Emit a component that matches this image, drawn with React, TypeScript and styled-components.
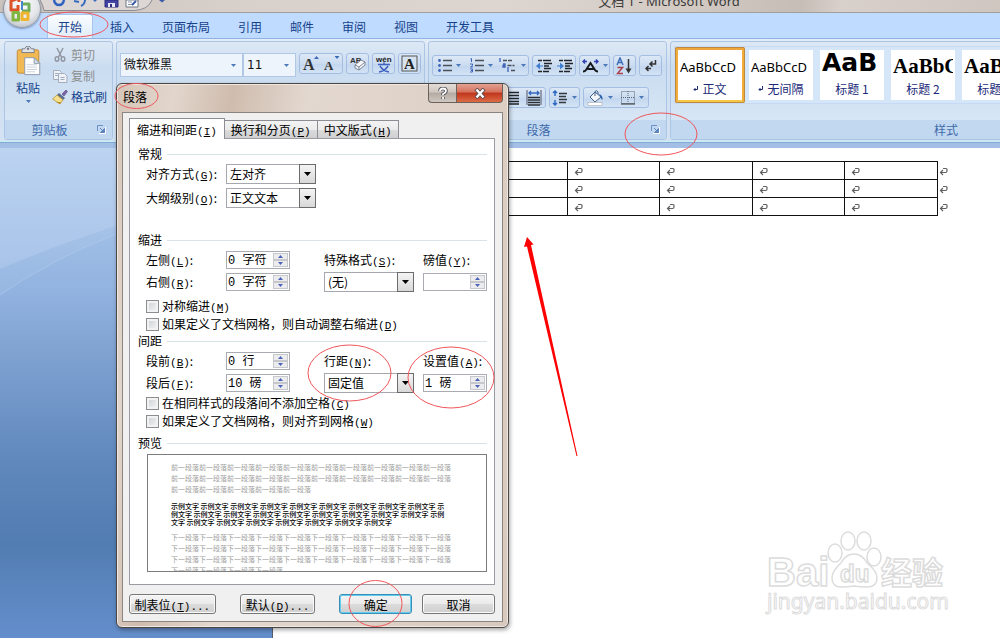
import React from "react";
import styled, { createGlobalStyle } from "styled-components";

const ui = `"Noto Sans", "Noto Sans CJK SC", sans-serif`;
const cjk = `"Noto Sans CJK SC", sans-serif`;
const mono = `"Liberation Mono", "Noto Sans CJK SC", monospace`;

const GlobalStyle = createGlobalStyle`
  *, *::before, *::after { box-sizing: border-box; }
  body { margin: 0; font: 12px/16px ${cjk}; color: #000; }
  button, input, select { font: inherit; color: inherit; margin: 0; padding: 0; }
  svg { display: block; flex: none; }
`;

const AppWindow = styled.div`
  position: relative;
  display: flex;
  flex-direction: column;
  min-height: 100vh;
  overflow: hidden;
  background: #fff;
`;

/* ---------- title bar and tabs ---------- */

const TitleBar = styled.header`
  position: relative;
  display: flex;
  justify-content: center;
  align-items: flex-end;
  height: 13px;
  padding-left: 338px;
  overflow: hidden;
  border-bottom: 1px solid #a39e9b;
  background: linear-gradient(100deg, #cbc3bd 0%, #d8d0ca 25%, #ddd6d0 50%, #d3cac4 68%, #c6bdb6 80%, #d8d0cb 84%, #cfc6c0 100%);
`;

const WindowTitle = styled.h1`
  margin: 0;
  font: 13px/22px ${ui};
  color: #3a3a3a;
  white-space: nowrap;
`;

const QuickAccess = styled.div`
  position: absolute;
  left: 40px;
  top: 0;
`;

const OfficeButton = styled.button`
  position: absolute;
  z-index: 2;
  left: 3px;
  top: -10px;
  width: 38px;
  height: 38px;
  border: 1px solid #8f9aa8;
  border-radius: 50%;
  background: radial-gradient(circle at 50% 35%, #fdfdfe 0%, #e4e6ea 55%, #b4b9c2 90%);
  box-shadow: 0 1px 2px rgba(60, 80, 120, 0.5);
`;

const TabBar = styled.nav`
  display: flex;
  align-items: flex-end;
  gap: 6px;
  height: 25px;
  padding-left: 47px;
  background: #bfdbff;
`;

const RibbonTab = styled.button<{ $active?: boolean }>`
  height: 24px;
  padding: 0 10px;
  border: 1px solid ${p => (p.$active ? "#a6c6ee" : "transparent")};
  border-bottom: 0;
  border-radius: 3px 3px 0 0;
  background: ${p => (p.$active ? "linear-gradient(#fafdff, #e1ecf9)" : "none")};
  font: 12px/22px ${cjk};
  color: #15428b;
`;

/* ---------- ribbon ---------- */

const Ribbon = styled.section`
  display: flex;
  gap: 3px;
  height: 104px;
  padding: 2px 0 1px 4px;
  overflow: hidden;
  border-top: 1px solid #8db2e3;
  border-bottom: 1px solid #c4f1f3;
  background: linear-gradient(#e3ecf7 0%, #cfdff1 25%, #d3e3f4 100%);
`;

const RibbonEdge = styled.div`
  height: 6px;
  background: #a3bfe6;
  border-top: 1px solid #86a8d4;
`;

const Group = styled.section<{ $width?: number }>`
  display: flex;
  flex-direction: column;
  flex: ${p => (p.$width ? `0 0 ${p.$width}px` : "1 0 560px")};
  overflow: hidden;
  border: 1px solid #abc6e5;
  border-radius: 3px;
  background: linear-gradient(#dde8f5 0%, #d0e0f2 20%, #c9dcf0 25%, #dbe9f6 100%);
`;

const GroupBody = styled.div<{ $inset: string }>`
  flex: 1;
  padding: ${p => p.$inset};
`;

const GroupLabel = styled.div`
  display: flex;
  align-items: center;
  justify-content: center;
  height: 19px;
  padding: 0 5px;
  background: #c1d8f0;
  color: #3e6aaa;
`;

const LabelText = styled.span`
  flex: 1;
  padding-right: 8px;
  text-align: center;
`;

const Launcher = styled.button`
  width: 10px;
  height: 14px;
  border: 0;
  background: none;
`;

const ClipboardBody = styled.div`
  display: flex;
  gap: 7px;
  padding: 2px 0 0 6px;
`;

const PasteButton = styled.button`
  display: flex;
  flex-direction: column;
  align-items: center;
  gap: 4px;
  width: 34px;
  padding-top: 2px;
  border: 0;
  background: none;
  color: #15428b;
`;

const ClipboardList = styled.div`
  display: flex;
  flex-direction: column;
`;

const ClipboardCommand = styled.button`
  display: flex;
  align-items: center;
  gap: 3px;
  height: 21px;
  border: 0;
  background: none;
  color: #15428b;
  &:disabled { color: #8d8d8d; }
`;

const ToolRow = styled.div<{ $gap?: number }>`
  display: flex;
  gap: ${p => p.$gap ?? 3}px;
  & + & { margin-top: 11px; }
`;

const FontCombo = styled.div<{ $width: number }>`
  display: flex;
  align-items: center;
  width: ${p => p.$width}px;
  height: 24px;
  padding: 0 5px 0 3px;
  border: 1px solid #b0c8e6;
  background: #edf4fc;
`;

const ComboInput = styled.input`
  flex: 1;
  min-width: 0;
  border: 0;
  outline: 0;
  background: none;
  font: 12px/20px ${ui};
  color: #111;
`;

const SizeInput = styled(ComboInput)`
  font: 12px/20px "DejaVu Sans", sans-serif;
`;

const DropButton = styled.button`
  display: flex;
  align-items: center;
  justify-content: center;
  width: 7px;
  height: 16px;
  border: 0;
  background: none;
`;

const ToolCluster = styled.div`
  display: flex;
  align-items: center;
  justify-content: space-around;
  height: 21px;
  border: 1px solid #a3bee2;
  border-radius: 3px;
  background: linear-gradient(#dce8f6, #cbdcf1 50%, #c2d6ee 52%, #d3e3f5);
`;

const ToolButton = styled.button<{ $width: number }>`
  display: flex;
  align-items: center;
  justify-content: center;
  gap: 4px;
  width: ${p => p.$width}px;
  height: 19px;
  border: 0;
  background: none;
`;

const Gallery = styled.div`
  display: flex;
  gap: 1px;
  height: 58px;
  border: 1px solid #c6dbf3;
  background: #d5e6f8;
`;

const StyleCard = styled.button<{ $active?: boolean }>`
  flex: 0 0 70px;
  height: 56px;
  padding: 0;
  border: 3px solid transparent;
  ${p => p.$active && `
    border-color: #eda63b #f2ac3c #f6c84a;
    border-radius: 2px;
    outline: 1px solid #c08a3e;
    outline-offset: -1px;
  `}
  background: #fff;
  background-clip: padding-box;
  overflow: hidden;
`;

const Sample = styled.span<{ $kind: "body" | "title" | "serif" }>`
  display: block;
  height: 30px;
  margin: 0 2px;
  overflow: hidden;
  white-space: nowrap;
  text-align: left;
  color: #000;
  font: ${p => ({
    body: `13px/34px ${ui}`,
    title: `bold 25px/26px "DejaVu Sans", sans-serif`,
    serif: `bold 21px/32px "Liberation Serif", serif`,
  })[p.$kind]};
`;

const StyleName = styled.span`
  display: flex;
  align-items: center;
  justify-content: center;
  gap: 4px;
  height: 20px;
  padding-bottom: 2px;
  color: #1c2a78;
  white-space: pre;
`;

/* ---------- document ---------- */

const Workspace = styled.main`
  flex: 1;
  display: flex;
`;

const Gutter = styled.div`
  flex: 0 0 272px;
  background: linear-gradient(#b3ceed 0%, #a6c3e9 12%, #91b2df 30%, #7fa2d1 42%, #6088bd 64%, #527db2 81%, #648ecb 100%);
`;

const Page = styled.article`
  flex: 1;
  padding: 13px 49px 0 16px;
  border-left: 1px solid #56606e;
  background: #fff;
`;

const DocTable = styled.table`
  width: 100%;
  border-collapse: collapse;
  table-layout: fixed;
`;

const DocCell = styled.td`
  height: 18px;
  padding: 2px 0 0 6px;
  border: 1px solid #111;
`;

const RowEnd = styled.td`
  width: 13px;
  padding: 2px 0 0 1px;
`;

/* ---------- dialog ---------- */

const Dialog = styled.section`
  position: absolute;
  z-index: 3;
  left: 116px;
  top: 83px;
  width: 393px;
  padding: 0 5px 5px;
  border: 1px solid #4b4744;
  border-radius: 6px;
  background: linear-gradient(100deg, #d6c5b8 0%, #e2d6cc 12%, #cfbcae 24%, #e3d8d0 40%, #d9c9bd 100%);
  box-shadow: inset 0 0 0 1px #f0e8e2, 1px 2px 4px rgba(0, 0, 0, 0.35);
`;

const DialogHeader = styled.header`
  display: flex;
  align-items: flex-start;
  height: 28px;
`;

const DialogTitle = styled.h2`
  flex: 1;
  margin: 0;
  padding: 5px 0 0 1px;
  font: 12px/16px ${cjk};
`;

const CaptionButton = styled.button<{ $close?: boolean }>`
  display: flex;
  align-items: center;
  justify-content: center;
  width: ${p => (p.$close ? 47 : 28)}px;
  height: 19px;
  border: 1px solid #6b625c;
  border-top: 0;
  border-radius: ${p => (p.$close ? "0 0 4px 0" : "0 0 0 4px")};
  border-right-width: ${p => (p.$close ? 1 : 0)}px;
  background: ${p => p.$close
    ? "linear-gradient(#e3a293 0%, #d5715c 45%, #c0351b 50%, #dd6a45 100%)"
    : "linear-gradient(#e3dbd5 0%, #cfc6bf 45%, #b3aaa3 50%, #cfc7c1 100%)"};
`;

const DialogBody = styled.form`
  padding: 5px 7px 7px 6px;
  border: 1px solid #8b8581;
  background: #f0f0f0;
`;

const DialogTabs = styled.div`
  display: flex;
  align-items: flex-end;
  height: 20px;
`;

const DialogTab = styled.button<{ $active?: boolean }>`
  position: relative;
  height: ${p => (p.$active ? 21 : 18)}px;
  margin-bottom: ${p => (p.$active ? -1 : 0)}px;
  padding: 0 ${p => (p.$active ? 7 : 6)}px;
  border: 1px solid #8c8e94;
  border-bottom: 0;
  border-left-width: ${p => (p.$active ? 1 : 0)}px;
  background: ${p => (p.$active ? "#fff" : "linear-gradient(#f3f3f3, #ebebeb 50%, #dcdcdc 52%, #d0d0d0)")};
  line-height: 17px;
  white-space: nowrap;
`;

const Panel = styled.div`
  padding: 7px 7px 12px 8px;
  border: 1px solid #9a9ca2;
  background: #fff;
`;

const SectionTitle = styled.h3<{ $top?: number }>`
  display: flex;
  align-items: center;
  gap: 5px;
  margin: ${p => p.$top ?? 0}px 0 2px;
  font: 12px/16px ${cjk};
  &::after {
    content: "";
    flex: 1;
    height: 1px;
    background: #d8e2e9;
  }
`;

const FieldGrid = styled.div<{ $gap: number }>`
  display: grid;
  grid-template-columns: 80px 98px 99px 64px;
  grid-auto-rows: 20px;
  row-gap: ${p => p.$gap}px;
  align-items: center;
  padding-left: 8px;
`;

const FieldLabel = styled.label<{ $column?: number }>`
  white-space: nowrap;
  ${p => p.$column && `grid-column: ${p.$column};`}
`;

const KeyHint = styled.span`
  font: 11px/12px ${mono};
`;

const SelectBox = styled.span`
  display: grid;
  grid-template-columns: 1fr 17px;
  width: 90px;
  height: 20px;
`;

const NativeSelect = styled.select`
  grid-area: 1 / 1 / 2 / 3;
  appearance: none;
  padding: 0 17px 0 3px;
  border: 1px solid #a5a8ae;
  border-radius: 0;
  background: #fff;
`;

const SelectArrow = styled.span`
  grid-area: 1 / 2 / 2 / 3;
  display: flex;
  align-items: center;
  justify-content: center;
  border: 1px solid #6c6c6c;
  background: linear-gradient(#f4f4f4, #d8d8d8);
  pointer-events: none;
`;

const SpinBox = styled.span`
  display: flex;
  width: 64px;
  height: 18px;
  border: 1px solid #a9acb3;
  background: #fff;
`;

const SpinInput = styled.input`
  flex: 1;
  min-width: 0;
  padding: 2px 0 0 1px;
  border: 0;
  outline: 0;
  background: none;
  font: 12px/14px ${mono};
`;

const SpinButtons = styled.span`
  display: flex;
  flex-direction: column;
  padding: 1px;
`;

const SpinButton = styled.button`
  display: flex;
  align-items: center;
  justify-content: center;
  width: 15px;
  height: 7px;
  border: 1px solid #c6c8cc;
  background: #ececee;
`;

const CheckList = styled.div<{ $top: number }>`
  margin-top: ${p => p.$top}px;
  padding-left: 8px;
`;

const CheckLabel = styled.label`
  display: flex;
  align-items: center;
  height: 18px;
  white-space: nowrap;
`;

const CheckInput = styled.input`
  appearance: none;
  flex: none;
  width: 13px;
  height: 13px;
  margin-right: 3px;
  border: 1px solid #8b8d90;
  background: linear-gradient(135deg, #cbcfd5, #f6f6f6);
  box-shadow: inset 0 0 0 2px #f2f2f2;
`;

const Preview = styled.div`
  height: 118px;
  margin: 3px 0 0 9px;
  padding: 7px 0 0 23px;
  overflow: hidden;
  border: 1px solid #7c7c7c;
`;

const PreviewText = styled.p<{ $sample?: boolean }>`
  width: ${p => (p.$sample ? 276 : 280)}px;
  margin: ${p => (p.$sample ? "7px 0 6px" : "0")};
  font-size: 7px;
  line-height: ${p => (p.$sample ? 8 : 11)}px;
  font-weight: ${p => (p.$sample ? 500 : 400)};
  color: ${p => (p.$sample ? "#000" : "#a0a0a0")};
  word-break: break-all;
`;

const ButtonBar = styled.div`
  display: flex;
  gap: 10px;
  margin-top: 9px;
`;

const PushButton = styled.button<{ $width: number; $primary?: boolean; $spaced?: boolean }>`
  width: ${p => p.$width}px;
  height: 20px;
  margin-right: ${p => (p.$spaced ? 14 : 0)}px;
  border: 1px solid ${p => (p.$primary ? "#3c8fb4" : "#777")};
  border-radius: 3px;
  background: linear-gradient(#f4f4f4, #ebebeb 48%, #dcdcdc 50%, #cfcfcf);
  box-shadow: inset 0 0 0 1px ${p => (p.$primary ? "#5fcdf2" : "#fafafa")};
  line-height: 17px;
  white-space: nowrap;
`;

/* ---------- drawings over the window ---------- */

const Watermark = styled.svg`
  position: absolute;
  left: 760px;
  top: 525px;
`;

const Markup = styled.svg`
  position: absolute;
  z-index: 4;
  left: 0;
  top: 0;
  pointer-events: none;
`;

const Caret = ({ color = "#4a78b8" }: { color?: string }) => (
  <svg width="5" height="3" viewBox="0 0 5 3"><path d="M0 0h5L2.500 3z" fill={color} /></svg>
);

const Key = ({ k }: { k: string }) => <KeyHint>(<u>{k}</u>)</KeyHint>;

const ParagraphMark = () => (
  <svg width="9" height="9" viewBox="0 0 9 9" fill="none" stroke="#606060" strokeWidth="1.200">
    <path d="M4 1.500h3q1 0 1 1v1.500q0 1.500-1.500 1.500H1.500M4 3L1.500 5.500 4 8" />
  </svg>
);

const LauncherIcon = () => (
  <svg width="9" height="9" viewBox="0 0 9 9" fill="none">
    <path d="M.5 6V.5H6" stroke="#6a90c4" />
    <path d="M3 3l3 3M7.500 3.500v4h-4z" stroke="#5d84bb" fill="#5d84bb" />
    <path d="M2 8.500h6.500V2" stroke="#fff" />
  </svg>
);

const PasteIcon = () => (
  <svg width="27" height="30" viewBox="0 0 28 32">
    <rect x="2" y="4" width="23" height="25" rx="2" fill="#f0b954" stroke="#c48a35" />
    <path d="M7 3h3q1-3 3.500-3T17 3h3v4H7z" fill="#dfe3e8" stroke="#747c88" />
    <circle cx="13.500" cy="3" r="1.300" fill="#747c88" />
    <path d="M10 12.500h10l6 6V30.500H10z" fill="#fff" stroke="#8a98ad" />
    <path d="M20 12.500v6h6z" fill="#d7e0ec" stroke="#8a98ad" />
    <path d="M12 20h11M12 22.500h11M12 25h11M12 27.500h9" stroke="#c6cedb" />
  </svg>
);

const CutIcon = () => (
  <svg width="16" height="16" viewBox="0 0 16 16" fill="none" stroke="#9298a3" strokeWidth="1.500">
    <path d="M5 1l4.500 9M11 1L6.500 10" />
    <ellipse cx="5" cy="12" rx="1.800" ry="2.200" /><ellipse cx="11" cy="12" rx="1.800" ry="2.200" />
  </svg>
);

const CopyIcon = () => (
  <svg width="16" height="16" viewBox="0 0 16 16" fill="#eef1f6" stroke="#a2adbf">
    <path d="M1.500 2.500h6l2 2v7h-8z" /><path d="M6.500 5.500h6l2.500 2.500v6.500H6.500z" />
    <path d="M3 5.500h3M3 7.500h3M8.500 9.500h4M8.500 11.500h4" />
  </svg>
);

const BrushIcon = () => (
  <svg width="16" height="16" viewBox="0 0 16 16">
    <path d="M10 5l4-4 1.500 1.500L12 7z" fill="#7c66a8" stroke="#54437e" strokeWidth=".6" />
    <path d="M7 4l6 5-2 2-6-5z" fill="#5a6b8c" />
    <path d="M5 6l6 5-3 4-7.500-5z" fill="#f5de8c" stroke="#b99636" strokeWidth=".8" />
    <path d="M4 13l4 2 1-2z" fill="#b98c2e" />
  </svg>
);

const ListLines = ({ left }: { left: React.ReactNode }) => (
  <svg width="14" height="15" viewBox="0 0 14 15">
    {left}
    <path d="M5 2.500h9M5 7.500h9M5 12.500h9" stroke="#4a4f58" strokeWidth="1.300" />
  </svg>
);

const BulletIcon = () => (
  <ListLines left={<g fill="#3d64b8"><circle cx="1.500" cy="2.500" r="1.400" /><circle cx="1.500" cy="7.500" r="1.400" /><circle cx="1.500" cy="12.500" r="1.400" /></g>} />
);

const NumberIcon = () => (
  <ListLines left={<path d="M.5 1l1-.5V4M0 6h2.500v1.500L.5 9h2.500M0 11h2.500v3H0M1 12.500h1.500" stroke="#3d64b8" fill="none" />} />
);

const MultiIcon = () => (
  <svg width="18" height="15" viewBox="0 0 18 15" fill="none">
    <path d="M1 0v4M4 6h2v3H4V7.500h2M9 9v5" stroke="#3d64b8" strokeWidth="1.300" />
    <path d="M4 2.500h10M8.500 7.500h7M12 12.500h5" stroke="#4a4f58" strokeWidth="1.300" strokeDasharray="4 1" />
  </svg>
);

const IndentIcon = ({ inward }: { inward?: boolean }) => (
  <svg width="16" height="14" viewBox="0 0 16 14" fill="none">
    <path d="M2 1.500h4M7 1.500h8M8 4.500h8M8 7h5M8 9.500h7M2 12.500h4M7 12.500h6" stroke="#20242a" strokeWidth="1.600" />
    <path d={inward ? "M0 6.500h3v-3l4 3.500-4 3.500v-3H0z" : "M7 6.500H4v-3L0 7l4 3.500v-3h3z"} fill="#3f7fd0" />
  </svg>
);

const ScaleIcon = () => (
  <svg width="17" height="14" viewBox="0 0 17 14" fill="none">
    <path d="M1 12.500q2 0 3-1.500l4.500-7L13 11q1 1.500 3 1.500M5.500 10h6" stroke="#15181d" strokeWidth="2" />
    <path d="M1 2.500h4M3 .5L1 2.500l2 2M12 2.500h4M14 .5l2 2-2 2" stroke="#2f3fb0" strokeWidth="1.400" />
  </svg>
);

const SortIcon = () => (
  <svg width="17" height="18" viewBox="0 0 17 18" fill="none" strokeWidth="1.500">
    <path d="M1 8l3-7 3 7M2 5.500h4" stroke="#3e6fb6" />
    <path d="M1.500 10.500h5L1.500 16.500h5.500" stroke="#a9414b" />
    <path d="M12.500 2v12" stroke="#333" /><path d="M9.500 11.500h6l-3 5z" fill="#333" />
  </svg>
);

const MarksIcon = () => (
  <svg width="14" height="14" viewBox="0 0 14 14" fill="none" stroke="#333" strokeWidth="1.500">
    <path d="M11.500 1v4H6M8.500 2.500L6 5l2.500 2.500M7 9.500H2M4.500 7L2 9.500 4.500 12" />
  </svg>
);

const JustifyIcon = () => (
  <svg width="15" height="14" viewBox="0 0 15 14"><path d="M0 1.500h15M0 4.500h15M0 7.500h15M0 10.500h15M0 13h15" stroke="#20242a" strokeWidth="1.500" /></svg>
);

const DistributeIcon = () => (
  <svg width="16" height="16" viewBox="0 0 16 16" fill="none">
    <path d="M1 0v15M15 0v15" stroke="#556" />
    <path d="M3 3h10M5 1L3 3l2 2M11 1l2 2-2 2" stroke="#3667c0" strokeWidth="1.300" />
    <path d="M2 7.500h12M2 10h12M2 12.500h12M2 15h12" stroke="#2a2e35" strokeWidth="1.400" />
  </svg>
);

const SpacingIcon = () => (
  <svg width="16" height="16" viewBox="0 0 16 16" fill="none">
    <path d="M3 1v5M1 3l2-2 2 2M3 10v5M1 13l2 2 2-2" stroke="#2f6bc4" strokeWidth="1.500" />
    <path d="M7 3.500h8M7 6.500h7M7 9.500h8M7 12.500h7" stroke="#33373e" strokeWidth="1.300" />
  </svg>
);

const BucketIcon = () => (
  <svg width="17" height="16" viewBox="0 0 17 16">
    <path d="M3 7l5-5 6 5-6 5z" fill="#f2f6fb" stroke="#44608c" />
    <path d="M8 6V1.500Q9.500-.5 11 2v2" fill="none" stroke="#44608c" />
    <path d="M12 4q4 1 3.500 6-2-1-2-3z" fill="#2e68b8" />
    <rect x="1" y="12.500" width="14" height="3" fill="#fff" stroke="#a8a8a8" strokeWidth=".6" />
  </svg>
);

const BorderIcon = () => (
  <svg width="14" height="14" viewBox="0 0 14 14" fill="none" stroke="#5a6575">
    <path d="M.5 .5h13v12H.5zM7 0v12M0 6.500h13" strokeDasharray="1 1" /><path d="M0 13h14" stroke="#333" />
  </svg>
);

const LetterIcon = ({ size, up }: { size: number; up: boolean }) => (
  <svg width="18" height="17" viewBox="0 0 18 17">
    <text x="1" y="15" fontFamily="Liberation Serif" fontWeight="bold" fontSize={size} fill="#333">A</text>
    <path d={up ? "M12 4h5L14.500 1z" : "M11.500 1h5L14 4z"} fill="#3d6cb4" />
  </svg>
);

const ClearIcon = () => (
  <svg width="18" height="17" viewBox="0 0 18 17">
    <text x="1" y="8" fontFamily="Liberation Sans" fontWeight="bold" fontSize="8" fill="#333">AB</text>
    <path d="M6 10l6-5 4 2v3l-6 5-4-2z" fill="#f6f8fb" stroke="#7d8796" /><path d="M6 10l4 2 6-5M10 12v3" fill="none" stroke="#7d8796" />
  </svg>
);

const PhoneticIcon = () => (
  <svg width="18" height="18" viewBox="0 0 18 18">
    <text x="1" y="7" fontFamily="Liberation Sans" fontWeight="bold" fontSize="8" fill="#222">wén</text>
    <path d="M3 9.500h12M9 7.500v2M5 11q3 5 9 6M13 11q-3 5-9 6" fill="none" stroke="#3e62c0" strokeWidth="1.500" />
  </svg>
);

const CharBorderIcon = () => (
  <svg width="17" height="17" viewBox="0 0 17 17">
    <rect x="1" y="1" width="15" height="15" fill="#d7e2f0" stroke="#555" />
    <text x="3" y="14" fontFamily="Liberation Serif" fontWeight="bold" fontSize="15" fill="#222">A</text>
  </svg>
);

const OfficeLogo = () => (
  <svg width="30" height="30" viewBox="0 0 30 30" fill="none" strokeWidth="3" strokeLinejoin="round">
    <path d="M15 8V4L7 7v9h7v-5" stroke="#dd5226" />
    <path d="M17 10h8v7h-7" stroke="#6fae5a" />
    <path d="M18 7v9" stroke="#4b86cd" strokeWidth="2" />
    <path d="M9 18.500h5.500V26H9z" stroke="#82b53f" />
    <path d="M18 19h6v6.500h-6z" stroke="#f0b42c" />
  </svg>
);

const QuickAccessArt = () => (
  <svg width="130" height="12" viewBox="0 0 130 12" fill="none">
    <path d="M0 0q3 5 4 10.500h90Q108 10 112 0" fill="#dcd7d5" stroke="#8b8b93" />
    <path d="M14 0q1 5 5 5t5-5" stroke="#2f62c0" strokeWidth="2.500" />
    <path d="M34 1l5 1M45 0q0 4-4 6" stroke="#3a6cc4" strokeWidth="2" />
    <path d="M53 0h4l-2 2z" fill="#3a6cc4" />
    <path d="M65 0v7h13V0z" fill="#4343a4" stroke="#2d2d7c" /><path d="M68 7V3h7v4z" fill="#e6e9f5" /><path d="M70 4h2v3h-2z" fill="#2d2d7c" />
    <path d="M86 0v7h12V0z" fill="#fff" stroke="#6e7683" /><path d="M88 2h4M88 4.500h6" stroke="#8693a8" /><path d="M92 5l4-4" stroke="#3a5ba6" strokeWidth="2" />
    <path d="M119 0h6l-3 2.500z" fill="#3a5ba6" />
  </svg>
);

const ToolDrop = ({ label, width, children }: { label: string; width: number; children: React.ReactNode }) => (
  <ToolButton type="button" aria-label={label} $width={width}>{children}<Caret /></ToolButton>
);

const Choice = ({ id, value }: { id: string; value: string }) => (
  <SelectBox>
    <NativeSelect id={id} defaultValue={value}><option>{value}</option></NativeSelect>
    <SelectArrow><svg width="7" height="4" viewBox="0 0 7 4"><path d="M0 0h7L3.500 4z" /></svg></SelectArrow>
  </SelectBox>
);

const Spinner = ({ id, value }: { id: string; value: string }) => (
  <SpinBox>
    <SpinInput id={id} defaultValue={value} />
    <SpinButtons>
      <SpinButton type="button" aria-label="增加"><svg width="5" height="3" viewBox="0 0 5 3"><path d="M0 3h5L2.500 0z" fill="#4a62b8" /></svg></SpinButton>
      <SpinButton type="button" aria-label="减少"><Caret color="#4a62b8" /></SpinButton>
    </SpinButtons>
  </SpinBox>
);

const Check = ({ text, k }: { text: string; k: string }) => (
  <CheckLabel><CheckInput type="checkbox" /><span>{text}<Key k={k} /></span></CheckLabel>
);

const tabs = ["开始", "插入", "页面布局", "引用", "邮件", "审阅", "视图", "开发工具"];

const styles: { sample: string; name: string; kind: "body" | "title" | "serif"; mark?: boolean }[] = [
  { sample: "AaBbCcD", name: "正文", kind: "body", mark: true },
  { sample: "AaBbCcD", name: "无间隔", kind: "body", mark: true },
  { sample: "AaB", name: "标题 1", kind: "title" },
  { sample: "AaBbC", name: "标题 2", kind: "serif" },
  { sample: "AaBbC", name: "标题 3", kind: "serif" },
];

export default function App() {
  return (
    <AppWindow>
      <GlobalStyle />
      <TitleBar>
        <QuickAccess><QuickAccessArt /></QuickAccess>
        <WindowTitle>文档 1 - Microsoft Word</WindowTitle>
      </TitleBar>
      <OfficeButton aria-label="Office"><OfficeLogo /></OfficeButton>
      <TabBar>
        {tabs.map((t, i) => <RibbonTab key={t} $active={i === 0}>{t}</RibbonTab>)}
      </TabBar>

      <Ribbon>
        <Group $width={109}>
          <GroupBody $inset="0">
            <ClipboardBody>
              <PasteButton><PasteIcon /><span>粘贴</span><Caret /></PasteButton>
              <ClipboardList>
                <ClipboardCommand disabled><CutIcon />剪切</ClipboardCommand>
                <ClipboardCommand disabled><CopyIcon />复制</ClipboardCommand>
                <ClipboardCommand><BrushIcon />格式刷</ClipboardCommand>
              </ClipboardList>
            </ClipboardBody>
          </GroupBody>
          <GroupLabel><LabelText>剪贴板</LabelText><Launcher aria-label="剪贴板"><LauncherIcon /></Launcher></GroupLabel>
        </Group>

        <Group $width={309}>
          <GroupBody $inset="11px 3px 0">
            <ToolRow>
              <ToolRow $gap={0}>
                <FontCombo $width={123}>
                  <ComboInput aria-label="字体" defaultValue="微软雅黑" />
                  <DropButton aria-label="字体列表"><Caret /></DropButton>
                </FontCombo>
                <FontCombo $width={53}>
                  <SizeInput aria-label="字号" defaultValue="11" />
                  <DropButton aria-label="字号列表"><Caret /></DropButton>
                </FontCombo>
              </ToolRow>
              <ToolCluster>
                <ToolButton aria-label="增大字体" $width={22}><LetterIcon size={16} up /></ToolButton>
                <ToolButton aria-label="缩小字体" $width={20}><LetterIcon size={13} up={false} /></ToolButton>
              </ToolCluster>
              <ToolCluster><ToolButton aria-label="清除格式" $width={21}><ClearIcon /></ToolButton></ToolCluster>
              <ToolCluster><ToolButton aria-label="拼音指南" $width={21}><PhoneticIcon /></ToolButton></ToolCluster>
              <ToolCluster><ToolButton aria-label="字符边框" $width={21}><CharBorderIcon /></ToolButton></ToolCluster>
            </ToolRow>
          </GroupBody>
          <GroupLabel />
        </Group>

        <Group $width={239}>
          <GroupBody $inset="13px 3px 0">
            <ToolRow>
              <ToolCluster>
                <ToolDrop label="项目符号" width={32}><BulletIcon /></ToolDrop>
                <ToolDrop label="编号" width={32}><NumberIcon /></ToolDrop>
                <ToolDrop label="多级列表" width={31}><MultiIcon /></ToolDrop>
              </ToolCluster>
              <ToolCluster>
                <ToolButton aria-label="减少缩进量" $width={21}><IndentIcon /></ToolButton>
                <ToolButton aria-label="增加缩进量" $width={21}><IndentIcon inward /></ToolButton>
              </ToolCluster>
              <ToolCluster><ToolDrop label="中文版式" width={29}><ScaleIcon /></ToolDrop></ToolCluster>
              <ToolCluster><ToolButton aria-label="排序" $width={21}><SortIcon /></ToolButton></ToolCluster>
              <ToolCluster><ToolButton aria-label="显示标记" $width={21}><MarksIcon /></ToolButton></ToolCluster>
            </ToolRow>
            <ToolRow>
              <ToolCluster>
                {["左对齐", "居中", "右对齐"].map(a => <ToolButton key={a} aria-label={a} $width={22}><JustifyIcon /></ToolButton>)}
                <ToolButton aria-label="两端对齐" $width={24}><JustifyIcon /></ToolButton>
                <ToolButton aria-label="分散对齐" $width={22}><DistributeIcon /></ToolButton>
              </ToolCluster>
              <ToolCluster><ToolDrop label="行距" width={29}><SpacingIcon /></ToolDrop></ToolCluster>
              <ToolCluster>
                <ToolDrop label="底纹" width={32}><BucketIcon /></ToolDrop>
                <ToolDrop label="边框" width={32}><BorderIcon /></ToolDrop>
              </ToolCluster>
            </ToolRow>
          </GroupBody>
          <GroupLabel><LabelText>段落</LabelText><Launcher aria-label="段落"><LauncherIcon /></Launcher></GroupLabel>
        </Group>

        <Group>
          <GroupBody $inset="4px 0 0 3px">
            <Gallery>
              {styles.map((s, i) => (
                <StyleCard key={s.name} $active={i === 0}>
                  <Sample $kind={s.kind}>{s.sample}</Sample>
                  <StyleName>
                    {s.mark && <svg width="5" height="6" viewBox="0 0 5 6" fill="none" stroke="#1c2a78"><path d="M4.500 0v3.500H1M2.500 2L1 3.500 2.500 5" /></svg>}
                    {s.name}
                  </StyleName>
                </StyleCard>
              ))}
            </Gallery>
          </GroupBody>
          <GroupLabel><LabelText>样式</LabelText></GroupLabel>
        </Group>
      </Ribbon>
      <RibbonEdge />

      <Workspace>
        <Gutter>
          <svg width="272" height="160" viewBox="0 0 272 160">
            <path d="M0 0H272V30Q180 45 116 78 60 96 0 121z" fill="#cfe2f8" fillOpacity=".3" />
            <path d="M0 121Q60 96 116 78V86Q50 112 0 147z" fill="#cfe2f8" fillOpacity=".1" />
            <path d="M0 147Q50 112 116 86 190 60 272 50" fill="none" stroke="#b8d0ee" strokeOpacity=".5" />
          </svg>
        </Gutter>
        <Page>
          <DocTable>
            <tbody>
              {[0, 1, 2].map(r => (
                <tr key={r}>
                  {[0, 1, 2, 3, 4, 5, 6].map(c => <DocCell key={c}><ParagraphMark /></DocCell>)}
                  <RowEnd><ParagraphMark /></RowEnd>
                </tr>
              ))}
            </tbody>
          </DocTable>
        </Page>
      </Workspace>

      <Watermark width="200" height="95" viewBox="0 0 200 95" fill="#fff" stroke="#dcdcdc" strokeWidth="1.500">
        <text x="7" y="61" fontFamily="Liberation Sans" fontWeight="bold" fontSize="40">Bai</text>
        <ellipse cx="75" cy="28" rx="7" ry="9" /><ellipse cx="88" cy="16" rx="7" ry="9" />
        <ellipse cx="104" cy="16" rx="7" ry="9" /><ellipse cx="114" cy="32" rx="7" ry="9" />
        <path d="M94 29q8 0 13 9 10 8 10 15 0 9-10 9-7 0-13-1-6 1-13 1-9 0-9-9 0-7 9-15 5-9 13-9z" />
        <text x="80" y="57" fontFamily="Liberation Sans" fontWeight="bold" fontSize="24">du</text>
        <text x="121" y="59" fontFamily="Noto Sans CJK SC" fontWeight="bold" fontSize="31">经验</text>
        <text x="7" y="84" fontFamily="Noto Sans" fontSize="21" strokeWidth="1">jingyan.baidu.com</text>
      </Watermark>

      <Dialog role="dialog" aria-label="段落">
        <DialogHeader>
          <DialogTitle>段落</DialogTitle>
          <CaptionButton aria-label="帮助">
            <svg width="10" height="13" viewBox="0 0 10 13" fill="none">
              <path d="M2 4q0-2.500 3-2.500T8 4q0 1.500-3 3v1M5 10v2" stroke="#4d4d55" strokeWidth="3.500" />
              <path d="M2 4q0-2.500 3-2.500T8 4q0 1.500-3 3v1M5 10v2" stroke="#fff" strokeWidth="1.800" />
            </svg>
          </CaptionButton>
          <CaptionButton $close aria-label="关闭">
            <svg width="12" height="11" viewBox="0 0 12 11" fill="none">
              <path d="M2 1l8 9M10 1L2 10" stroke="#54454a" strokeWidth="4" />
              <path d="M2.500 1.500l7 8M9.500 1.500l-7 8" stroke="#fff" strokeWidth="2.400" />
            </svg>
          </CaptionButton>
        </DialogHeader>
        <DialogBody>
          <DialogTabs>
            <DialogTab type="button" $active>缩进和间距<Key k="I" /></DialogTab>
            <DialogTab type="button">换行和分页<Key k="P" /></DialogTab>
            <DialogTab type="button">中文版式<Key k="H" /></DialogTab>
          </DialogTabs>
          <Panel>
            <SectionTitle>常规</SectionTitle>
            <FieldGrid $gap={4}>
              <FieldLabel htmlFor="align">对齐方式<Key k="G" />:</FieldLabel>
              <Choice id="align" value="左对齐" />
              <FieldLabel htmlFor="outline" $column={1}>大纲级别<Key k="O" />:</FieldLabel>
              <Choice id="outline" value="正文文本" />
            </FieldGrid>

            <SectionTitle $top={24}>缩进</SectionTitle>
            <FieldGrid $gap={2}>
              <FieldLabel htmlFor="left">左侧<Key k="L" />:</FieldLabel>
              <Spinner id="left" value="0 字符" />
              <FieldLabel htmlFor="special">特殊格式<Key k="S" />:</FieldLabel>
              <FieldLabel htmlFor="by">磅值<Key k="Y" />:</FieldLabel>
              <FieldLabel htmlFor="right">右侧<Key k="R" />:</FieldLabel>
              <Spinner id="right" value="0 字符" />
              <Choice id="special" value="(无)" />
              <Spinner id="by" value="" />
            </FieldGrid>
            <CheckList $top={5}>
              <Check text="对称缩进" k="M" />
              <Check text="如果定义了文档网格，则自动调整右缩进" k="D" />
            </CheckList>

            <SectionTitle>间距</SectionTitle>
            <FieldGrid $gap={2}>
              <FieldLabel htmlFor="before">段前<Key k="B" />:</FieldLabel>
              <Spinner id="before" value="0 行" />
              <FieldLabel htmlFor="line">行距<Key k="N" />:</FieldLabel>
              <FieldLabel htmlFor="at">设置值<Key k="A" />:</FieldLabel>
              <FieldLabel htmlFor="after">段后<Key k="F" />:</FieldLabel>
              <Spinner id="after" value="10 磅" />
              <Choice id="line" value="固定值" />
              <Spinner id="at" value="1 磅" />
            </FieldGrid>
            <CheckList $top={1}>
              <Check text="在相同样式的段落间不添加空格" k="C" />
              <Check text="如果定义了文档网格，则对齐到网格" k="W" />
            </CheckList>

            <SectionTitle $top={5}>预览</SectionTitle>
            <Preview>
              <PreviewText>{"前一段落".repeat(25)}</PreviewText>
              <PreviewText $sample>{"示例文字 ".repeat(26)}</PreviewText>
              <PreviewText>{"下一段落".repeat(34)}</PreviewText>
            </Preview>
          </Panel>
          <ButtonBar>
            <PushButton type="button" $width={87} $spaced>制表位<Key k="T" /><KeyHint>...</KeyHint></PushButton>
            <PushButton type="button" $width={76} $spaced>默认<Key k="D" /><KeyHint>...</KeyHint></PushButton>
            <PushButton type="button" $width={73} $primary>确定</PushButton>
            <PushButton type="button" $width={73}>取消</PushButton>
          </ButtonBar>
        </DialogBody>
      </Dialog>

      <Markup width="1000" height="638" viewBox="0 0 1000 638" fill="none" stroke="#f0565a">
        <ellipse cx="74" cy="24.500" rx="34" ry="12.500" />
        <ellipse cx="136.500" cy="96" rx="21.500" ry="12.500" />
        <ellipse cx="661" cy="134" rx="36" ry="21" />
        <ellipse cx="349.500" cy="373" rx="41.500" ry="28" />
        <ellipse cx="451" cy="377.500" rx="43" ry="30.500" />
        <ellipse cx="375.500" cy="603.500" rx="26.500" ry="23" />
        <path d="M527 237l6.500 7.500-2.500.5L577.500 456h-1L527 246.500l-3 .5z" fill="#fe0000" stroke="none" />
      </Markup>
    </AppWindow>
  );
}
